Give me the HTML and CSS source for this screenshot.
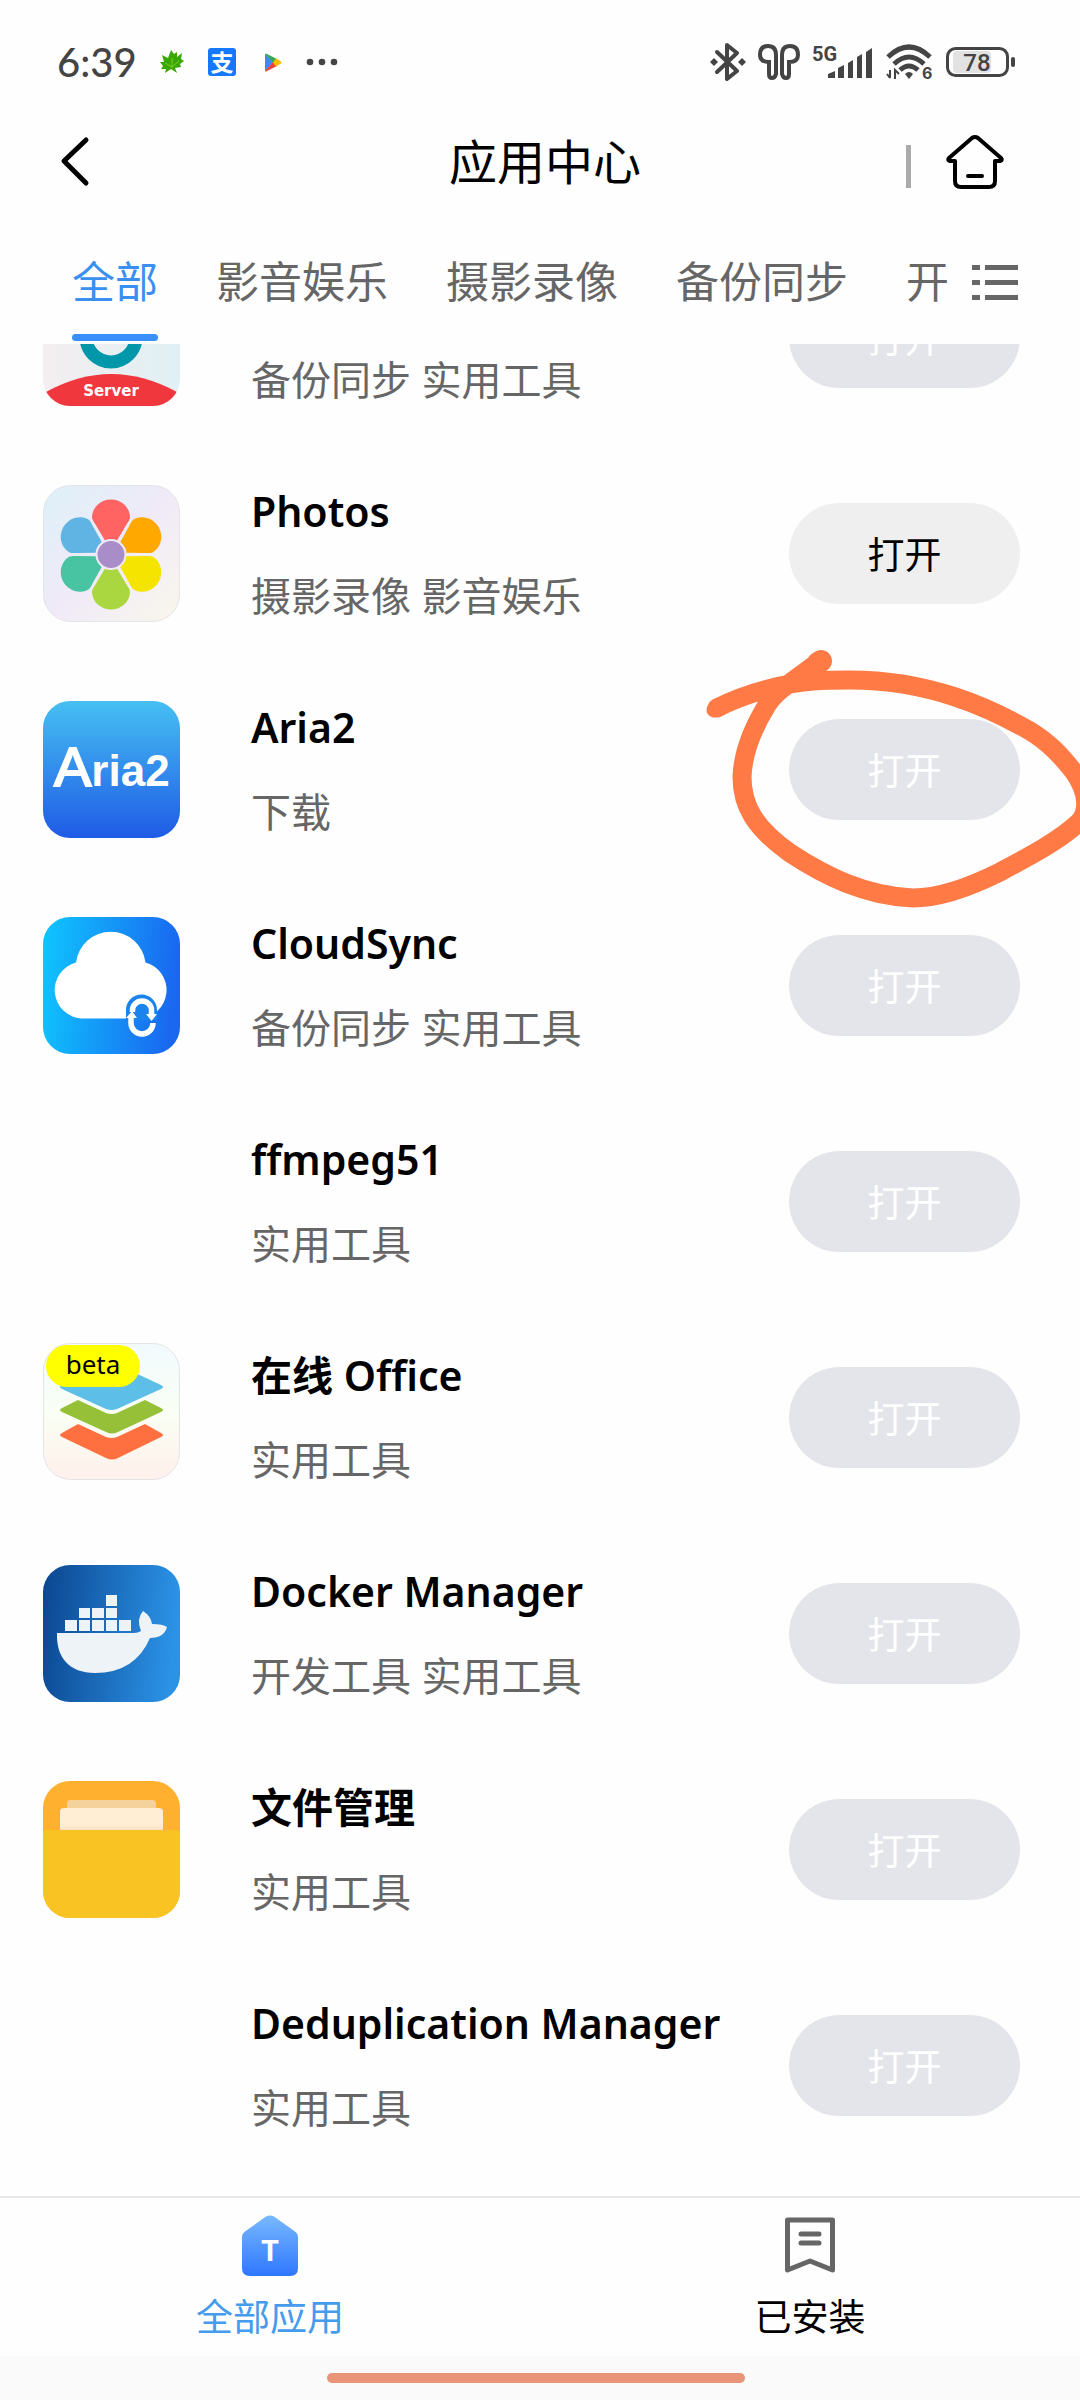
FILE: index.html
```html
<!DOCTYPE html>
<html lang="zh-CN">
<head>
  <meta charset="UTF-8" />
  <title>应用中心</title>
  <meta name="viewport" content="width=device-width, initial-scale=1.0" />
  <link rel="stylesheet" href="styles.css">
</head>
<body>
  <!-- 状态栏 -->
  <div class="status">
    <span class="time">6:39</span>
    <svg class="leaf" width="24" height="24" viewBox="0 0 24 24">
      <path fill="#38a800" d="M11 0l3 4 3-2v5l5-4-1 6 3 2-4 3 1 3-6 1 2 5-6-4-6 4 1-4-5 0 2-3-3-4 4 0-2-7 6 3z"/>
      <path stroke="#7fc926" fill="none" d="M12 18V8M12 17l-7-4M12 17l7-6"/>
    </svg>
    <span class="pay">支</span>
    <svg class="play" width="17" height="19" viewBox="0 0 17 19">
      <path fill="#4285f4" d="M0 1v17l8-8.500z"/>
      <path fill="#34a853" d="M0 1q1-1 2 0l10 5-4 4z"/>
      <path fill="#ea4335" d="M0 18q1 1 2 0l10-5-4-4z"/>
      <path fill="#fbbc04" d="M11 5.500l5 3q1 1 0 2l-5 3-3-4z"/>
    </svg>
    <svg width="32" height="8" viewBox="0 0 32 8" fill="#444">
      <circle cx="4" cy="4" r="3.300"/><circle cx="16" cy="4" r="3.300"/><circle cx="28" cy="4" r="3.300"/>
    </svg>
    <div class="status-right">
      <svg width="36" height="40" viewBox="0 0 36 40" fill="none" stroke="#444" stroke-width="4" stroke-linejoin="round" stroke-linecap="round">
        <path d="M7 10l20 19-10 8V3l10 8L7 30"/>
        <path fill="#444" stroke="none" d="M0 20l4-4 4 4-4 4zM28 20l4-4 4 4-4 4z"/>
      </svg>
      <svg width="42" height="36" viewBox="0 0 42 36" fill="none" stroke="#444" stroke-width="4">
        <path d="M11 18v12q0 4 3 4t4-4V11q0-9-8-9t-8 9q0 7 9 7z"/>
        <path d="M31 18v12q0 4-3 4t-4-4V11q0-9 8-9t8 9q0 7-9 7z"/>
      </svg>
      <svg width="62" height="34" viewBox="0 0 62 34" fill="#444">
        <text x="0" y="16" class="net-text">5G</text>
        <path d="M16 33v-4l7-3v7zM26 33V23l6-3v13zM36 33V18l5-3v18zM45 33V12l5-3v24zM54 33V7l6-4v30z"/>
      </svg>
      <svg width="48" height="36" viewBox="0 0 48 36" fill="none" stroke="#444" stroke-width="5">
        <path d="M2 13q21-20 42 0"/>
        <path d="M8 20q15-14 30 0"/>
        <path d="M14 26q9-8 18 0"/>
        <path fill="#444" stroke="none" d="M19 30q4-4 8 0l-4 5z"/>
        <path stroke-width="2" d="M4 26v8M1 30l3 4M9 35v-9l4 4"/>
        <text x="36" y="35" class="wifi-text">6</text>
      </svg>
      <svg width="70" height="30" viewBox="0 0 70 30">
        <rect x="7" y="4" width="38" height="22" rx="4" fill="#e2e2e2"/>
        <rect x="1.500" y="1.500" width="60" height="27" rx="8" fill="none" stroke="#444" stroke-width="3"/>
        <rect x="65" y="10" width="4" height="10" rx="2" fill="#444"/>
        <text x="31" y="24" class="battery-text">78</text>
      </svg>
    </div>
  </div>

  <!-- 标题栏 -->
  <header class="header">
    <button class="icon-btn back" aria-label="返回">
      <svg width="30" height="50" viewBox="0 0 30 50" fill="none" stroke="#000" stroke-width="5" stroke-linecap="round" stroke-linejoin="round"><path d="M26 3L4 24l22 22"/></svg>
    </button>
    <h1>应用中心</h1>
    <div class="header-right">
      <span class="divider"></span>
      <button class="icon-btn" aria-label="主页">
        <svg width="58" height="56" viewBox="0 0 58 56" fill="none" stroke="#000" stroke-width="4" stroke-linejoin="round" stroke-linecap="round">
          <path d="M26 4q3-2 6 0l23 20q2 2-1 3h-5v20q0 6-6 6H15q-6 0-6-6V27H4q-3-1-1-3z"/>
          <path d="M22 42h14"/>
        </svg>
      </button>
    </div>
  </header>

  <nav class="tabs">
    <div class="tab-list">
      <a href="#" class="tab active">全部</a>
      <a href="#" class="tab">影音娱乐</a>
      <a href="#" class="tab">摄影录像</a>
      <a href="#" class="tab">备份同步</a>
      <a href="#" class="tab">开</a>
    </div>
    <button class="icon-btn tab-menu" aria-label="分类">
      <svg width="46" height="36" viewBox="0 0 46 36" fill="#666"><path d="M0 0h8v5H0zM13 0h33v5H13zM0 15h8v5H0zM13 15h33v5H13zM0 30h8v5H0zM13 30h33v5H13z"/></svg>
    </button>
  </nav>

  <!-- 应用列表 -->
  <main class="apps">
    <ul class="app-list">
      <li class="app">
        <div class="app-icon">
          <svg viewBox="0 0 137 137">
            <defs>
              <linearGradient id="g-server"><stop offset="0" stop-color="#f4eef0"/><stop offset="1" stop-color="#dff0f4"/></linearGradient>
              <clipPath id="round"><rect width="137" height="137" rx="27"/></clipPath>
            </defs>
            <g clip-path="url(#round)">
              <rect width="137" height="137" fill="url(#g-server)"/>
              <circle cx="68" cy="68" r="25" fill="none" stroke="#0097ab" stroke-width="13"/>
              <path fill="#f0373e" d="M3 123q65-36 131 0v14H3z"/>
            </g>
            <text x="68" y="127" class="server-text">Server</text>
          </svg>
        </div>
        <div class="app-info">
          <h2></h2>
          <p>备份同步 实用工具</p>
        </div>
        <button class="open" disabled>打开</button>
      </li>

      <li class="app">
        <div class="app-icon">
          <svg viewBox="0 0 137 137">
            <defs>
              <linearGradient id="g-photos" x2="1" y2="1"><stop offset="0" stop-color="#ddf1f8"/><stop offset=".5" stop-color="#f0eaf8"/><stop offset="1" stop-color="#f9f7ec"/></linearGradient>
              <path id="petal" d="M-6-14L-15.500-30Q-19-35-19-37A19 18 0 0 1 19-37Q19-35 15.500-30L6-14Z"/>
            </defs>
            <rect x=".5" y=".5" width="136" height="136" rx="27" fill="url(#g-photos)" stroke="#e4e4ea"/>
            <g transform="translate(68 69.500)">
              <use href="#petal" fill="#ff6463"/>
              <use href="#petal" fill="#ffa800" transform="rotate(60)"/>
              <use href="#petal" fill="#f5e300" transform="rotate(120)"/>
              <use href="#petal" fill="#aad640" transform="rotate(180)"/>
              <use href="#petal" fill="#49c4a3" transform="rotate(240)"/>
              <use href="#petal" fill="#60b4e4" transform="rotate(300)"/>
              <circle r="14.500" fill="#a98dc8" stroke="#f0eaf8" stroke-width="2"/>
            </g>
          </svg>
        </div>
        <div class="app-info">
          <h2>Photos</h2>
          <p>摄影录像 影音娱乐</p>
        </div>
        <button class="open">打开</button>
      </li>

      <li class="app">
        <div class="app-icon">
          <svg viewBox="0 0 137 137">
            <defs><linearGradient id="g-aria" x2="0" y2="1"><stop offset="0" stop-color="#46bff2"/><stop offset="1" stop-color="#1f5be6"/></linearGradient></defs>
            <rect width="137" height="137" rx="27" fill="url(#g-aria)"/>
            <text x="11" y="85" class="aria-text"><tspan class="aria-cap">A</tspan>ria2</text>
          </svg>
        </div>
        <div class="app-info">
          <h2>Aria2</h2>
          <p>下载</p>
        </div>
        <button class="open" disabled>打开</button>
        <svg class="mark" width="380" height="280" viewBox="0 0 380 280" fill="none" stroke="#ff7a45" stroke-width="19" stroke-linecap="round" stroke-linejoin="round">
          <path stroke-width="15" d="M14 69Q24 62 36 57"/>
          <path d="M17 67Q44 53 80 45C105 40 120 39 150 39C230 39 290 67 330 90C350 102 362 116 374 131C390 154 388 173 378 182C360 199 330 215 300 231C270 246 240 257 213 257C165 255 125 235 90 212C55 187 42 165 42 136C43 108 56 82 67 64Q74 53 90 42L120 20"/>
          <path stroke-width="22" d="M118 22l3-2"/>
        </svg>
      </li>

      <li class="app">
        <div class="app-icon">
          <svg viewBox="0 0 137 137">
            <defs><linearGradient id="g-cloud" x2="1" y2=".1"><stop offset="0" stop-color="#0fc6fe"/><stop offset="1" stop-color="#1a68f0"/></linearGradient></defs>
            <rect width="137" height="137" rx="27" fill="url(#g-cloud)"/>
            <path fill="#fff" d="M33 45.500A35 35 0 0 1 102.500 45.500A28.500 28.500 0 0 1 96 101.500H38A28.500 28.500 0 0 1 33 45.500z"/>
            <path fill="#1a83ec" d="M83 102V93a15.500 15.500 0 0 1 31 0v10H83z"/>
            <g fill="none" stroke="#fff" stroke-width="5.500">
              <path d="M89.500 95v-2a9.500 9 0 0 1 19 0v6"/>
              <path d="M88 101v5a10.500 10.500 0 0 0 22 0"/>
            </g>
            <path fill="#fff" d="M103 97h11l-5.500 7zM83 101h11l-5-7z"/>
          </svg>
        </div>
        <div class="app-info">
          <h2>CloudSync</h2>
          <p>备份同步 实用工具</p>
        </div>
        <button class="open" disabled>打开</button>
      </li>

      <li class="app">
        <div class="app-icon"></div>
        <div class="app-info">
          <h2>ffmpeg51</h2>
          <p>实用工具</p>
        </div>
        <button class="open" disabled>打开</button>
      </li>

      <li class="app">
        <div class="app-icon with-badge">
          <svg viewBox="0 0 137 137">
            <defs><linearGradient id="g-office" x2="0" y2="1"><stop offset="0" stop-color="#f2faff"/><stop offset=".5" stop-color="#f9fff4"/><stop offset="1" stop-color="#fff0ec"/></linearGradient></defs>
            <rect x=".5" y=".5" width="136" height="136" rx="27" fill="url(#g-office)" stroke="#e4e4ea"/>
            <path fill="#5dbfe8" d="M19 42l44-20q6-3 12 0l43 20q4 2 0 4L74 66q-6 2-11 0L19 46q-4-2 0-4z"/>
            <path fill="#96c038" d="M19 65l16-8 28 13q6 2 11 0l28-13 16 8q4 2 0 4L75 89q-6 3-12 0L19 69q-4-2 0-4z"/>
            <path fill="#ff7040" d="M19 90l16-9 28 13q6 2 11 0l28-13 16 9q4 2 0 4l-43 21q-6 3-12 0L19 94q-4-2 0-4z"/>
          </svg>
          <span class="beta">beta</span>
        </div>
        <div class="app-info">
          <h2>在线 Office</h2>
          <p>实用工具</p>
        </div>
        <button class="open" disabled>打开</button>
      </li>

      <li class="app">
        <div class="app-icon">
          <svg viewBox="0 0 137 137">
            <defs><linearGradient id="g-docker" x2="1" y2=".1"><stop offset="0" stop-color="#0b4690"/><stop offset="1" stop-color="#2b92e6"/></linearGradient></defs>
            <rect width="137" height="137" rx="27" fill="url(#g-docker)"/>
            <g fill="#eef3f7">
              <path d="M22 55h12v11H22zM36 55h11v11H36zM49 55h12v11H49zM63 55h11v11H63zM76 55h12v11H76zM36 43h11v10H36zM49 43h12v10H49zM63 43h11v10H63zM63 30h11v11H63z"/>
              <path d="M14 68h77q4 0 7-2-5-12 2-20 8 5 9 13 11 0 15 3-3 11-17 11-15 35-55 35C26 108 13 92 14 68z"/>
            </g>
          </svg>
        </div>
        <div class="app-info">
          <h2>Docker Manager</h2>
          <p>开发工具 实用工具</p>
        </div>
        <button class="open" disabled>打开</button>
      </li>

      <li class="app">
        <div class="app-icon">
          <svg viewBox="0 0 137 137">
            <defs><linearGradient id="g-sheet" x2="0" y2="1"><stop offset=".7" stop-color="#ffeed4"/><stop offset="1" stop-color="#f3dcba"/></linearGradient></defs>
            <g clip-path="url(#round)">
              <rect width="137" height="137" fill="#ffb02e"/>
              <rect x="24" y="19" width="89" height="20" rx="4" fill="#f5d19c"/>
              <rect x="17" y="27" width="103" height="24" rx="4" fill="url(#g-sheet)"/>
              <path fill="#f9c423" d="M0 52q0-3 3-3h131q3 0 3 3v85H0z"/>
            </g>
          </svg>
        </div>
        <div class="app-info">
          <h2>文件管理</h2>
          <p>实用工具</p>
        </div>
        <button class="open" disabled>打开</button>
      </li>

      <li class="app">
        <div class="app-icon"></div>
        <div class="app-info">
          <h2>Deduplication Manager</h2>
          <p>实用工具</p>
        </div>
        <button class="open" disabled>打开</button>
      </li>
    </ul>
  </main>

  <!-- 底部导航 -->
  <nav class="bottom">
    <a href="#" class="bottom-item current">
      <svg width="56" height="62" viewBox="0 0 56 62">
        <defs><linearGradient id="g-home" x2="0" y2="1"><stop offset="0" stop-color="#79b9ff"/><stop offset="1" stop-color="#2e77ff"/></linearGradient></defs>
        <path fill="url(#g-home)" d="M24 1.500q4-2 8 0l21 15q3 2 3 6V53q0 8-8 8H8q-8 0-8-8V22.500q0-4 3-6z"/>
        <text x="28" y="46" class="home-text">T</text>
      </svg>
      全部应用
    </a>
    <a href="#" class="bottom-item">
      <svg width="50" height="62" viewBox="0 0 50 62" fill="none" stroke="#666" stroke-width="5">
        <path stroke-linejoin="round" d="M2.500 5h45v50L25 46 2.500 55z"/>
        <path stroke-linecap="round" d="M16 19h18M16 28h18"/>
      </svg>
      已安装
    </a>
  </nav>
  <div class="gesture"><span></span></div>
</body>
</html>
```
FILE: styles.css
```css
* { box-sizing: border-box; margin: 0; padding: 0; }
body {
  height: 100vh; display: flex; flex-direction: column;
  background: #fefefe; color: #000; overflow: hidden;
  font-family: "Noto Sans", "Noto Sans CJK SC", sans-serif;
}
a { color: inherit; text-decoration: none; }
button { font-family: inherit; border: none; }
svg { display: block; flex-shrink: 0; overflow: visible; }
.icon-btn { background: none; cursor: pointer; }

/* 状态栏 */
.status { display: flex; align-items: center; height: 124px; padding: 0 64px 0 57px; }
.time { width: 103px; font-family: Lato, sans-serif; font-size: 40px; font-weight: 500; color: #444; }
.leaf { margin-right: 24px; }
.pay {
  width: 28px; height: 28px; margin-right: 29px; border-radius: 3px; background: #1677ff; color: #fff;
  font-family: "Noto Sans CJK SC", sans-serif; font-size: 23px; line-height: 27px; font-weight: 700; text-align: center;
}
.play { margin-right: 24px; }
.status-right { display: flex; align-items: center; gap: 12px; margin-left: auto; }
.net-text { font-family: Roboto, sans-serif; font-size: 20px; font-weight: 700; }
.wifi-text { font-family: Inter, sans-serif; font-size: 16px; font-weight: 700; fill: #444; stroke: none; }
.battery-text { font-family: Roboto, sans-serif; font-size: 24px; font-weight: 500; fill: #444; text-anchor: middle; }

/* 标题栏 */
.header { display: grid; grid-template-columns: 1fr auto 1fr; align-items: center; height: 76px; padding: 0 50px 0 60px; }
.header h1 { align-self: start; font-family: "Noto Sans CJK SC", sans-serif; font-size: 48px; line-height: 70px; font-weight: 400; }
.back { justify-self: start; }
.header-right { display: flex; align-items: center; justify-content: flex-end; gap: 35px; margin-right: 26px; }
.divider { width: 5px; height: 43px; margin-top: 8px; background: #aaa; }

/* 分类 */
.tabs { display: flex; height: 144px; color: #666; }
.tab-list { flex: 1; display: flex; gap: 58px; padding-left: 72px; overflow: hidden; }
.tab {
  position: relative; flex-shrink: 0; height: 141px; padding-top: 50px; line-height: 64px;
  font-size: 43px; white-space: nowrap;
}
.tab.active { color: #3a8ff0; }
.tab.active::after {
  content: ""; position: absolute; left: 0; right: 0; bottom: 0;
  height: 7px; border-radius: 4px; background: #3a8ffa;
}
.tab-menu { width: 128px; padding: 22px 0 0 20px; }

/* 列表 */
.apps { flex: 1; min-height: 0; overflow: hidden; }
.app-list { list-style: none; margin-top: -115px; }
.app { position: relative; display: flex; align-items: center; height: 216px; padding: 0 60px 0 43px; }
.app-icon { position: relative; width: 137px; height: 137px; margin-right: 71px; }
.app-icon.with-badge { margin-bottom: 12px; }
.app-info { flex: 1; display: flex; flex-direction: column; gap: 29px; white-space: nowrap; }
.app-info h2 { height: 56px; font-size: 41px; line-height: 56px; font-weight: 600; }
.app-info p { font-size: 40px; line-height: 56px; color: #666; }
.open { width: 231px; height: 101px; border-radius: 51px; background: #efefef; color: #000; font-size: 37px; cursor: pointer; }
.open:disabled { background: #e4e5eb; color: #fff; cursor: default; }
.mark { position: absolute; right: 0; top: -20px; pointer-events: none; }

.server-text { font-family: "DejaVu Sans", sans-serif; font-size: 15px; font-weight: 700; fill: #fff; text-anchor: middle; }
.aria-text { font-family: "Liberation Sans", sans-serif; font-size: 44px; font-weight: 700; fill: #fff; }
.aria-cap { font-family: "Liberation Sans Narrow", "Liberation Sans", sans-serif; font-size: 56px; font-weight: 400; stroke: #fff; stroke-width: 2; }
.beta {
  position: absolute; left: 3px; top: 2px; width: 94px; height: 42px; border-radius: 21px;
  background: #ff0; font-size: 26px; line-height: 38px; text-align: center;
}

/* 底部导航 */
.bottom { display: flex; height: 160px; border-top: 2px solid #e8e8e8; }
.bottom-item {
  flex: 1; display: flex; flex-direction: column; align-items: center; gap: 12px;
  padding-top: 17px; font-size: 37px; line-height: 56px;
}
.bottom-item.current { color: #459bec; }
.home-text { font-family: Lato, sans-serif; font-size: 29px; font-weight: 900; fill: #fff; text-anchor: middle; }
.gesture { display: flex; justify-content: center; align-items: center; height: 44px; padding-right: 8px; background: #fafafa; }
.gesture span { width: 39%; height: 10px; border-radius: 5px; background: #e99577; }
```
